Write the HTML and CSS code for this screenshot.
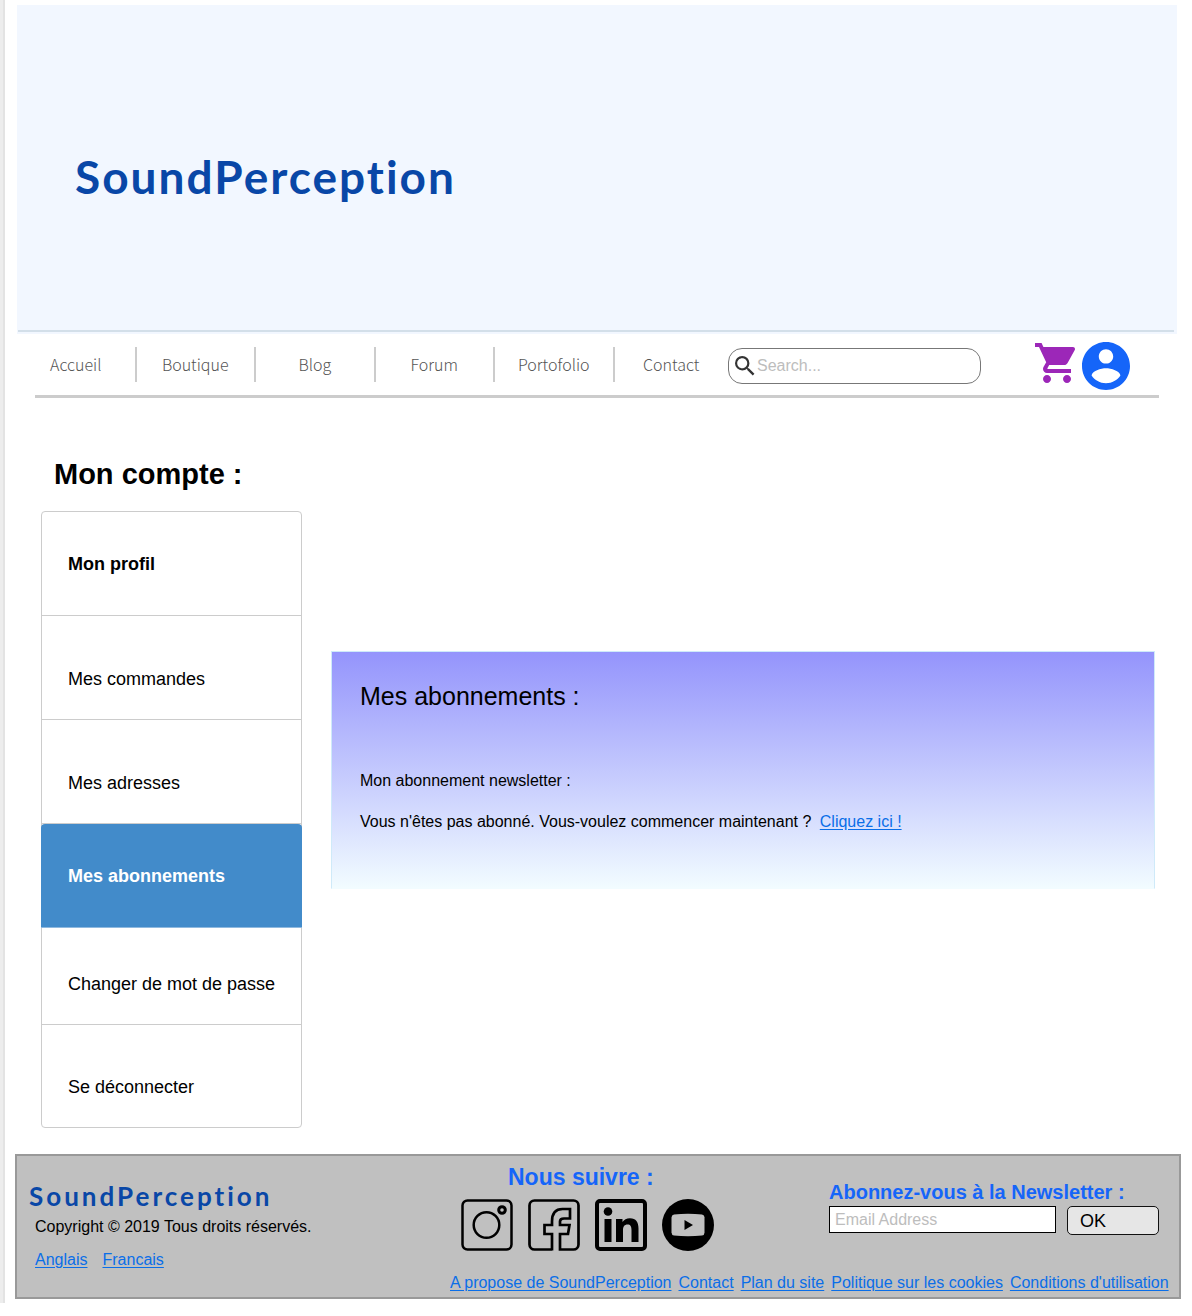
FILE: index.html
```html
<!DOCTYPE html>
<html lang="fr">
<head>
<meta charset="utf-8">
<meta name="viewport" content="width=device-width, initial-scale=1">
<title>SoundPerception - Mon compte</title>
<link rel="stylesheet" href="styles.css">
</head>
<body>
<div class="page">
  <header class="banner">
    <div class="brand">SoundPerception</div>
  </header>

  <div class="toolbar">
    <nav class="menu" aria-label="Navigation principale">
      <a href="#">Accueil</a>
      <a href="#">Boutique</a>
      <a href="#">Blog</a>
      <a href="#">Forum</a>
      <a href="#">Portofolio</a>
      <a href="#">Contact</a>
    </nav>
    <form class="search" role="search">
      <svg viewBox="3 3 18 18" aria-hidden="true"><path d="M15.5 14h-.79l-.28-.27A6.471 6.471 0 0 0 16 9.500 6.500 6.500 0 1 0 9.500 16c1.610 0 3.090-.59 4.230-1.570l.27.28v.79l5 4.990L20.490 19l-4.990-5zm-6 0C7.010 14 5 11.990 5 9.500S7.010 5 9.500 5 14 7.010 14 9.500 11.990 14 9.500 14z"/></svg>
      <input type="search" placeholder="Search..." aria-label="Search">
    </form>
    <div class="shortcuts">
      <a href="#" aria-label="Panier"><svg class="cart" viewBox="1 2 21 20"><path d="M7 18c-1.100 0-1.990.9-1.990 2S5.900 22 7 22s2-.9 2-2-.9-2-2-2zM1 2v2h2l3.600 7.590-1.350 2.450c-.16.28-.25.61-.25.96 0 1.100.9 2 2 2h12v-2H7.420c-.14 0-.25-.11-.25-.25l.03-.12.9-1.630h7.450c.75 0 1.410-.41 1.750-1.030l3.580-6.490c.08-.14.12-.31.12-.48 0-.55-.45-1-1-1H5.210l-.94-2H1zm16 16c-1.100 0-1.990.9-1.990 2s.89 2 1.990 2 2-.9 2-2-.9-2-2-2z"/></svg></a>
      <a href="#" aria-label="Mon compte"><svg class="user" viewBox="2 2 20 20"><path d="M12 2C6.480 2 2 6.480 2 12s4.480 10 10 10 10-4.480 10-10S17.520 2 12 2zm0 3c1.660 0 3 1.340 3 3s-1.340 3-3 3-3-1.340-3-3 1.340-3 3-3zm0 14.200c-2.500 0-4.710-1.280-6-3.220.03-1.990 4-3.080 6-3.080 1.990 0 5.970 1.090 6 3.080-1.290 1.940-3.500 3.220-6 3.220z"/></svg></a>
    </div>
  </div>

  <main class="account">
    <div class="side">
      <h1>Mon compte :</h1>
      <nav class="tabs" aria-label="Mon compte">
        <a class="tab strong" href="#">Mon profil</a>
        <a class="tab" href="#">Mes commandes</a>
        <a class="tab" href="#">Mes adresses</a>
        <a class="tab strong current" href="#" aria-current="page">Mes abonnements</a>
        <a class="tab short" href="#">Changer de mot de passe</a>
        <a class="tab" href="#">Se déconnecter</a>
      </nav>
    </div>
    <section class="panel">
      <h2>Mes abonnements :</h2>
      <p>Mon abonnement newsletter :</p>
      <p class="invite">Vous n'êtes pas abonné. Vous-voulez commencer maintenant ? <a class="link" href="#">Cliquez ici !</a></p>
    </section>
  </main>

  <footer class="footer">
    <div class="about">
      <div class="brand small">SoundPerception</div>
      <p>Copyright © 2019 Tous droits réservés.</p>
      <div class="langs"><a class="link" href="#">Anglais</a><a class="link" href="#">Francais</a></div>
    </div>
    <div class="more">
      <div class="columns">
        <div class="follow">
          <h2>Nous suivre :</h2>
          <div class="socials">
            <a href="#" aria-label="Instagram"><svg viewBox="0 0 52 52" fill="none" stroke="#000" stroke-width="2.500"><rect x="1.500" y="1.500" width="49" height="49" rx="5"/><circle cx="25.500" cy="26" r="12.800"/><circle cx="41" cy="11" r="3.300" stroke-width="3"/></svg></a>
            <a href="#" aria-label="Facebook"><svg viewBox="0 0 52 52" fill="none" stroke="#000" stroke-width="2.700"><path d="M24 51.500V35h-7.500v-9H24v-3.500C24 14.500 27 10 34.500 10H42v9.500h-6c-3 0-4 .8-4 3V26h9.500L40 35h-8v15.500h13.500a5 5 0 0 0 5-5v-39a5 5 0 0 0-5-5h-39a5 5 0 0 0-5 5v39a5 5 0 0 0 5 5H24"/></svg></a>
            <a href="#" aria-label="LinkedIn"><svg viewBox="0 0 52 52"><rect x="2" y="2" width="48" height="48" rx="3" fill="none" stroke="#000" stroke-width="4"/><circle cx="13" cy="12.500" r="4.300"/><path d="M9.500 20h7v23h-7zM21 20h6.500v3c1.500-2.300 4-3.700 7.500-3.700 6 0 8.500 4 8.500 10.200V43h-7V31c0-3.500-1-5.500-4-5.500S28 27.700 28 31v12h-7z"/></svg></a>
            <a href="#" aria-label="YouTube"><svg viewBox="0 0 52 52"><circle cx="26" cy="26" r="26"/><path fill="#c0c0c0" d="M12 15.500q14-1.600 28 0 2.500.5 2.500 3v15q0 2.500-2.500 3-14 1.600-28 0-2.500-.5-2.500-3v-15q0-2.500 2.500-3z"/><path d="M22.500 21v10l8.500-5z"/></svg></a>
          </div>
        </div>
        <form class="newsletter">
          <label for="email">Abonnez-vous à la Newsletter :</label>
          <div class="fields">
            <input id="email" type="email" placeholder="Email Address">
            <button type="button">OK</button>
          </div>
        </form>
      </div>
      <nav class="legal" aria-label="Informations">
        <a class="link" href="#">A propose de SoundPerception</a>
        <a class="link" href="#">Contact</a>
        <a class="link" href="#">Plan du site</a>
        <a class="link" href="#">Politique sur les cookies</a>
        <a class="link" href="#">Conditions d'utilisation</a>
      </nav>
    </div>
  </footer>
</div>
</body>
</html>
```
FILE: styles.css
```css
* {
  box-sizing: border-box;
}

body {
  margin: 0;
  background: #fff;
  color: #000;
  font: 16px/20px "Liberation Sans", Arial, sans-serif;
}

h1, h2, p {
  margin: 0;
}

svg {
  display: block;
}

.link {
  color: #0a6ee8;
  text-decoration: underline;
  text-underline-offset: 2px;
}

.page {
  margin-left: 3px;
  padding: 5px 11px 4px 10px;
  border-left: 2px solid #e3e3e3;
  box-shadow: -3px 0 0 #ededed;
}

/* Banner */
.banner {
  display: flex;
  align-items: center;
  height: 329px;
  margin: 0 4px 0 2px;
  padding: 15px 58px 0;
  background: linear-gradient(#d3dfe9, #d3dfe9) 1px 325px / calc(100% - 4px) 2px no-repeat #f2f7ff;
}

.brand {
  color: #0947a7;
  font: bold 46px/56px "Lato", sans-serif;
  letter-spacing: 2px;
}

.brand.small {
  font-size: 26px;
  line-height: 32px;
  letter-spacing: 3px;
}

/* Navigation bar */
.toolbar {
  display: grid;
  grid-template-columns: 711fr 253fr 178fr;
  align-items: center;
  height: 64px;
  margin: 0 22px 0 2px;
  background: linear-gradient(#ccc, #ccc) 18px 100% / 100% 3px no-repeat;
}

.menu {
  display: grid;
  grid-template-columns: repeat(5, 119fr) 113fr;
  margin-bottom: 3px;
}

.menu a {
  border-right: 2px solid #ccc;
  color: #555;
  font: 300 16px/35px "Noto Sans CJK JP", "Open Sans", sans-serif;
  text-align: center;
  text-decoration: none;
}

.menu a:last-child {
  border-right: 0;
}

.search {
  display: flex;
  align-items: center;
  gap: 2px;
  height: 36px;
  padding: 0 16px 0 6px;
  border: 1px solid #777;
  border-radius: 14px;
}

.search svg {
  flex: none;
  width: 20px;
  height: 20px;
  fill: #333;
}

.search input {
  width: 100%;
  min-width: 0;
  padding: 0;
  border: 0;
  outline: 0;
  background: none;
  font: 16px/20px "Liberation Sans", Arial, sans-serif;
}

input::placeholder {
  color: #bdbdbd;
  opacity: 1;
}

.shortcuts {
  display: flex;
  justify-content: flex-end;
  gap: 5px;
  padding-right: 29px;
}

.cart {
  width: 42px;
  height: 42px;
  fill: #9c27b8;
}

.user {
  width: 48px;
  height: 48px;
  fill: #1565f9;
}

/* Account area */
.account {
  display: grid;
  grid-template-columns: 261fr 824fr;
  gap: 29px;
  margin: 56px 26px 26px;
}

.side h1 {
  padding-left: 13px;
  font-size: 29px;
  line-height: 40px;
}

.tabs {
  display: grid;
  margin-top: 17px;
  border: 1px solid #ccc;
  border-radius: 4px;
}

.tab {
  display: flex;
  align-items: center;
  height: 104px;
  padding: 22px 26px 0;
  border-bottom: 1px solid #ccc;
  color: #000;
  font-size: 18px;
  text-decoration: none;
  white-space: nowrap;
}

.tab:last-child {
  height: 102px;
}

.tab.strong {
  padding-top: 0;
  font-weight: bold;
}

.tab.short {
  height: 97px;
  padding: 16px 0 0 26px;
}

.tab.current {
  margin: 0 -1px;
  padding-left: 27px;
  border-color: #8fb9df;
  border-radius: 4px 4px 0 0;
  background: #428bca;
  color: #fff;
}

.tab:last-child {
  border-bottom: 0;
}

.panel {
  align-self: start;
  min-height: 238px;
  margin-top: 197px;
  padding: 29px 28px;
  border: 1px solid #cfeaf9;
  border-bottom-color: #f2fcff;
  background: linear-gradient(#9494fc, #f2fcff);
}

.panel h2 {
  margin-bottom: 60px;
  font-size: 25px;
  font-weight: normal;
  line-height: 30px;
}

.invite {
  margin-top: 21px;
}

.invite .link {
  margin-left: 4px;
}

/* Footer */
.footer {
  display: grid;
  grid-template-columns: 433fr 729fr;
  height: 145px;
  border: 2px solid #999;
  background: #c0c0c0;
}

.about {
  padding: 24px 0 0 12px;
}

.about p {
  padding: 5px 6px 13px;
}

.langs {
  display: flex;
  gap: 15px;
  padding-left: 6px;
}

.columns {
  display: grid;
  grid-template-columns: 379fr 350fr;
  height: 117px;
}

.follow {
  padding: 7px 0 0 11px;
}

.follow h2 {
  padding-left: 47px;
  color: #1565f9;
  font-size: 23px;
  line-height: 28px;
}

.socials {
  display: flex;
  gap: 15px;
  margin-top: 8px;
}

.socials svg {
  width: 52px;
  height: 52px;
}

.newsletter {
  padding: 23px 20px 0 0;
}

.newsletter label {
  display: block;
  color: #1565f9;
  font-size: 20px;
  font-weight: bold;
  line-height: 27px;
}

.fields {
  display: grid;
  grid-template-columns: 227fr 92fr;
  gap: 11px;
}

.fields input {
  min-width: 0;
  height: 27px;
  padding: 0 5px;
  border: 1px solid #000;
  background: #fff;
  font: 16px/20px "Liberation Sans", Arial, sans-serif;
}

.fields button {
  height: 29px;
  padding: 0 12px;
  border: 1px solid #111;
  border-radius: 5px;
  background: #e6e6e6;
  color: #000;
  font: 18px/20px "Liberation Sans", Arial, sans-serif;
  text-align: left;
}

.legal {
  display: flex;
  gap: 7px;
  white-space: nowrap;
}
```
